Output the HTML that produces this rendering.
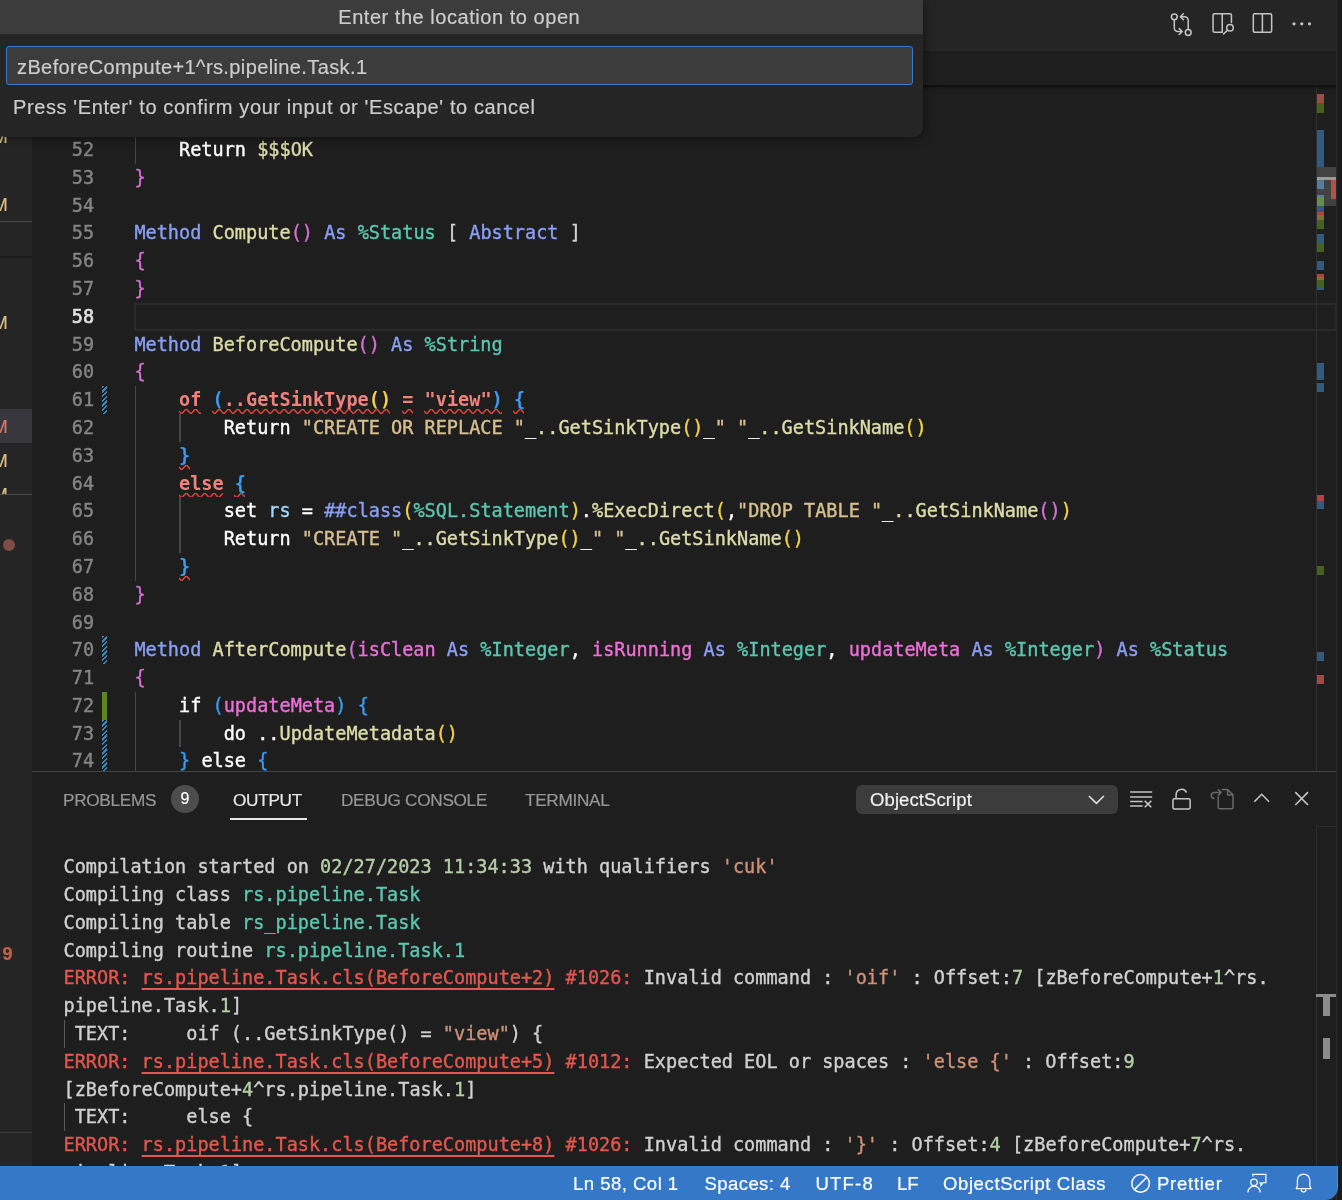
<!DOCTYPE html>
<html><head><meta charset="utf-8"><title>VS Code</title>
<style>
*{box-sizing:border-box}
html,body{margin:0;padding:0}
body{width:1342px;height:1200px;overflow:hidden;background:#1e1e1e;position:relative;font-family:"Liberation Sans","DejaVu Sans",sans-serif;color:#ccc;-webkit-text-stroke:.2px}
.abs{position:absolute}
#side{left:0;top:0;width:32px;height:1166px;background:#252526;overflow:hidden}
#side .m{position:absolute;left:-8.3px;width:16px;text-align:right;font-size:18px;color:#d9bd8b;line-height:20px}
#titlebar{left:32px;top:0;width:1305px;height:51px;background:#252526}
#crumbs{left:32px;top:51px;width:1305px;height:34px;background:#1e1e1e}
#edshadow{left:32px;top:85px;width:1304px;height:5px;background:linear-gradient(#000 0,rgba(0,0,0,0) 100%);opacity:.55}
#rightstrip{left:1336.3px;top:0;width:6px;height:1200px;background:#1b1b1b;border-left:1.4px solid #2c2c2c}
#editor{left:32px;top:85px;width:1305px;height:686px;overflow:hidden;background:#1e1e1e}
.mono{font-family:"DejaVu Sans Mono","Liberation Mono",monospace;font-size:18.54px;white-space:pre;-webkit-text-stroke:.38px}
.ln{position:absolute;left:0;width:62.2px;text-align:right;color:#858585;height:28px;line-height:28px}
.ln.cur{color:#dedede;-webkit-text-stroke:.7px}
.cl{position:absolute;left:102.4px;height:28px;line-height:28px;color:#d4d4d4}
.k{color:#8a9ff5}.f{color:#dcdcaa}.p1{color:#d670d6}.p2{color:#f5d33f}.p3{color:#3a9cf5}.t{color:#5cc7b0}
.w{color:#fff}.s{color:#d7c08f}.v{color:#a3d4f7}.a{color:#ee6fd8}.e{color:#f0827e;font-weight:bold;-webkit-text-stroke:0}
.sq{font-weight:bold;-webkit-text-stroke:0}
svg.sqg{overflow:hidden}
.ig{position:absolute;width:1.4px;background:#464646}
.ig.act{background:#707070}
.gd{position:absolute;left:70px;width:5px}
.gd.mod{background:repeating-linear-gradient(135deg,#3889c0 0,#3889c0 1.8px,transparent 1.8px,transparent 3.3px)}
.gd.add{background:#5a8628;left:70px;width:5px}
#curline{left:102px;top:218px;width:1203px;height:27.5px;border:2px solid #2a2a2a}
#ruler{left:1284px;top:0;width:21px;height:686px;border-left:1px solid #303031}
#ruler i{position:absolute;left:0;width:7px;display:block}
.rb{background:#335a7b}.rr{background:#a24945}.rg{background:#465f22}.ro{background:#7f702b}
#panel{left:32px;top:771px;width:1305px;height:395px;background:#1e1e1e;border-top:1px solid #444;overflow:hidden}
.tab{position:absolute;top:17.5px;font-size:17.2px;line-height:20px;color:#969696;letter-spacing:-.3px}
.tab.on{color:#e7e7e7}
.ol{position:absolute;left:31.5px;height:28px;line-height:28px;color:#d0d0d0}
.og{color:#b5cea8}.oo{color:#cf9178}.ot{color:#5cc7b0}.or{color:#e4564e}.ou{color:#e4564e;text-decoration:underline;text-underline-offset:4px;text-decoration-thickness:1.5px}
#status{left:0;top:1165.8px;width:1337.5px;height:34.2px;background:#3578c7;border-bottom-right-radius:13px;border-right:1px solid #4a8ada;color:#fff;font-size:18.5px;line-height:35px}
#status span{position:absolute;top:0;white-space:pre}
#qi{left:-4px;top:0;width:926.5px;height:136.6px;background:#252526;border-radius:0 0 9px 9px;box-shadow:0 0 12px rgba(0,0,0,.55)}
#qititle{left:0;top:0;width:926.5px;height:34px;background:#3c3c3c;color:#ccc;font-size:20px;line-height:34px;text-align:center;letter-spacing:.54px}
#qiinput{left:10px;top:46px;width:907px;height:38.5px;background:#3c3c3c;border:1.6px solid #3a7ad2;border-radius:3px;color:#ccc;font-size:20px;line-height:41.7px;padding-left:10px;letter-spacing:.39px}
#qimsg{left:17px;top:92.5px;font-size:20px;line-height:28px;color:#ccc;white-space:pre;letter-spacing:.61px}
svg{position:absolute;overflow:visible}
</style></head>
<body>
<div id="wrap" style="position:absolute;left:0;top:0;width:1342px;height:1200px;will-change:transform">
<div class="abs" id="titlebar"></div>
<div class="abs" id="crumbs"></div>
<svg style="left:1168px;top:11px" width="26" height="26" viewBox="0 0 26 26" fill="none" stroke="#c5c5c5" stroke-width="1.5" stroke-linecap="round" stroke-linejoin="round">
<circle cx="6.3" cy="5.8" r="2.9"/><circle cx="20.2" cy="21.5" r="2.9"/>
<path d="M6.3 8.7V17a3.5 3.5 0 0 0 3.5 3.5H14M11.2 17.5l3 3-3 3"/>
<path d="M20.2 18.6V9.3a3.5 3.5 0 0 0-3.5-3.5H12.6M15.4 2.8l-3 3 3 3"/>
</svg>
<svg style="left:1210px;top:11px" width="26" height="26" viewBox="0 0 26 26" fill="none" stroke="#c5c5c5" stroke-width="1.5" stroke-linecap="round" stroke-linejoin="round">
<path d="M12.250 21.350H4.550a1.500 1.500 0 0 1-1.500-1.500V4.250A1.500 1.500 0 0 1 4.550 2.750H19.950a1.500 1.500 0 0 1 1.500 1.500V11.400M12.250 2.750V21.350"/>
<circle cx="20" cy="16.700" r="3.300"/><path d="M17.600 19.100L13.500 23"/>
</svg>
<svg style="left:1250px;top:11px" width="26" height="26" viewBox="0 0 26 26" fill="none" stroke="#c5c5c5" stroke-width="1.5" stroke-linejoin="round">
<rect x="3.300" y="2.750" width="18.350" height="18.600" rx="1.500"/><path d="M12.400 2.750V21.350"/>
</svg>
<svg style="left:1289px;top:11px" width="26" height="26" viewBox="0 0 26 26" fill="#c5c5c5">
<circle cx="5" cy="12.800" r="1.600"/><circle cx="12.800" cy="12.800" r="1.600"/><circle cx="20.500" cy="12.800" r="1.600"/>
</svg>

<div class="abs" id="editor">
<div class="ln mono" style="top:51.10px">52</div>
<div class="cl mono" style="top:51.10px">    <span class="w">Return</span> <span class="f">$$$OK</span></div>
<div class="ln mono" style="top:78.89px">53</div>
<div class="cl mono" style="top:78.89px"><span class="p1">}</span></div>
<div class="ln mono" style="top:106.68px">54</div>
<div class="ln mono" style="top:134.47px">55</div>
<div class="cl mono" style="top:134.47px"><span class="k">Method</span> <span class="f">Compute</span><span class="p1">()</span> <span class="k">As</span> <span class="t">%Status</span> [ <span class="k">Abstract</span> ]</div>
<div class="ln mono" style="top:162.26px">56</div>
<div class="cl mono" style="top:162.26px"><span class="p1">{</span></div>
<div class="ln mono" style="top:190.05px">57</div>
<div class="cl mono" style="top:190.05px"><span class="p1">}</span></div>
<div class="ln mono cur" style="top:217.84px">58</div>
<div class="ln mono" style="top:245.63px">59</div>
<div class="cl mono" style="top:245.63px"><span class="k">Method</span> <span class="f">BeforeCompute</span><span class="p1">()</span> <span class="k">As</span> <span class="t">%String</span></div>
<div class="ln mono" style="top:273.42px">60</div>
<div class="cl mono" style="top:273.42px"><span class="p1">{</span></div>
<div class="ln mono" style="top:301.21px">61</div>
<div class="cl mono" style="top:301.21px">    <span class="e sq">of</span> <span class="p3 sq">(</span><span class="e sq">..GetSinkType</span><span class="p2 sq">()</span> <span class="e sq">=</span> <span class="e sq">"view"</span><span class="p3 sq">)</span> <span class="p3 sq">{</span></div>
<div class="ln mono" style="top:329.00px">62</div>
<div class="cl mono" style="top:329.00px">        <span class="w">Return</span> <span class="s">"CREATE OR REPLACE "</span><span class="w">_</span><span class="f">..GetSinkType</span><span class="p2">()</span><span class="w">_</span><span class="s">" "</span><span class="w">_</span><span class="f">..GetSinkName</span><span class="p2">()</span></div>
<div class="ln mono" style="top:356.79px">63</div>
<div class="cl mono" style="top:356.79px">    <span class="p3 sq">}</span></div>
<div class="ln mono" style="top:384.58px">64</div>
<div class="cl mono" style="top:384.58px">    <span class="e sq">else</span> <span class="p3 sq">{</span></div>
<div class="ln mono" style="top:412.37px">65</div>
<div class="cl mono" style="top:412.37px">        <span class="w">set</span> <span class="v">rs</span> <span class="w">=</span> <span class="k">##class</span><span class="p2">(</span><span class="t">%SQL.Statement</span><span class="p2">)</span><span class="w">.</span><span class="f">%ExecDirect</span><span class="p2">(</span><span class="w">,</span><span class="s">"DROP TABLE "</span><span class="w">_</span><span class="f">..GetSinkName</span><span class="p1">()</span><span class="p2">)</span></div>
<div class="ln mono" style="top:440.16px">66</div>
<div class="cl mono" style="top:440.16px">        <span class="w">Return</span> <span class="s">"CREATE "</span><span class="w">_</span><span class="f">..GetSinkType</span><span class="p2">()</span><span class="w">_</span><span class="s">" "</span><span class="w">_</span><span class="f">..GetSinkName</span><span class="p2">()</span></div>
<div class="ln mono" style="top:467.95px">67</div>
<div class="cl mono" style="top:467.95px">    <span class="p3 sq">}</span></div>
<div class="ln mono" style="top:495.74px">68</div>
<div class="cl mono" style="top:495.74px"><span class="p1">}</span></div>
<div class="ln mono" style="top:523.53px">69</div>
<div class="ln mono" style="top:551.32px">70</div>
<div class="cl mono" style="top:551.32px"><span class="k">Method</span> <span class="f">AfterCompute</span><span class="p1">(</span><span class="a">isClean</span> <span class="k">As</span> <span class="t">%Integer</span><span class="w">,</span> <span class="a">isRunning</span> <span class="k">As</span> <span class="t">%Integer</span><span class="w">,</span> <span class="a">updateMeta</span> <span class="k">As</span> <span class="t">%Integer</span><span class="p1">)</span> <span class="k">As</span> <span class="t">%Status</span></div>
<div class="ln mono" style="top:579.11px">71</div>
<div class="cl mono" style="top:579.11px"><span class="p1">{</span></div>
<div class="ln mono" style="top:606.90px">72</div>
<div class="cl mono" style="top:606.90px">    <span class="w">if</span> <span class="p3">(</span><span class="a">updateMeta</span><span class="p3">)</span> <span class="p3">{</span></div>
<div class="ln mono" style="top:634.69px">73</div>
<div class="cl mono" style="top:634.69px">        <span class="w">do</span> <span class="w">..</span><span class="f">UpdateMetadata</span><span class="p2">()</span></div>
<div class="ln mono" style="top:662.48px">74</div>
<div class="cl mono" style="top:662.48px">    <span class="p3">}</span> <span class="w">else</span> <span class="p3">{</span></div>
<div class="ig" style="left:102.6px;top:51.10px;height:27.79px"></div>
<div class="ig" style="left:102.6px;top:301.21px;height:194.53px"></div>
<div class="ig" style="left:147.4px;top:329.00px;height:27.79px"></div>
<div class="ig" style="left:147.4px;top:412.37px;height:55.58px"></div>
<div class="ig" style="left:102.6px;top:606.90px;height:83.37px"></div>
<div class="ig" style="left:147.4px;top:634.69px;height:27.79px"></div>
<div class="gd mod" style="top:301.21px;height:27.79px"></div>
<div class="gd mod" style="top:551.32px;height:27.79px"></div>
<div class="gd add" style="top:606.90px;height:27.79px"></div>
<div class="gd mod" style="top:634.69px;height:55.58px"></div>
<div class="abs" id="curline"></div>
<svg class="sqg" style="left:146.60px;top:324.37px" width="22.30" height="4.63"><polyline points="0.00,2.00 2.60,4.90 7.33,-0.30 9.26,2.00 11.86,4.90 16.59,-0.30 18.52,2.00 21.12,4.90 25.85,-0.30 27.78,2.00 30.38,4.90 35.11,-0.30 37.04,2.00" fill="none" stroke="#dd453b" stroke-width="1.5"/></svg>
<svg class="sqg" style="left:180.04px;top:324.37px" width="178.38" height="4.63"><polyline points="0.00,2.00 2.60,4.90 7.33,-0.30 9.26,2.00 11.86,4.90 16.59,-0.30 18.52,2.00 21.12,4.90 25.85,-0.30 27.78,2.00 30.38,4.90 35.11,-0.30 37.04,2.00 39.64,4.90 44.37,-0.30 46.30,2.00 48.90,4.90 53.63,-0.30 55.56,2.00 58.16,4.90 62.89,-0.30 64.82,2.00 67.42,4.90 72.15,-0.30 74.08,2.00 76.68,4.90 81.41,-0.30 83.34,2.00 85.94,4.90 90.67,-0.30 92.60,2.00 95.20,4.90 99.93,-0.30 101.86,2.00 104.46,4.90 109.19,-0.30 111.12,2.00 113.72,4.90 118.45,-0.30 120.38,2.00 122.98,4.90 127.71,-0.30 129.64,2.00 132.24,4.90 136.97,-0.30 138.90,2.00 141.50,4.90 146.23,-0.30 148.16,2.00 150.76,4.90 155.49,-0.30 157.42,2.00 160.02,4.90 164.75,-0.30 166.68,2.00 169.28,4.90 174.01,-0.30 175.94,2.00 178.54,4.90 183.27,-0.30 185.20,2.00 187.80,4.90 192.53,-0.30 194.46,2.00" fill="none" stroke="#dd453b" stroke-width="1.5"/></svg>
<svg class="sqg" style="left:369.58px;top:324.37px" width="11.15" height="4.63"><polyline points="0.00,2.00 2.60,4.90 7.33,-0.30 9.26,2.00 11.86,4.90 16.59,-0.30 18.52,2.00 21.12,4.90 25.85,-0.30 27.78,2.00" fill="none" stroke="#dd453b" stroke-width="1.5"/></svg>
<svg class="sqg" style="left:391.88px;top:324.37px" width="78.04" height="4.63"><polyline points="0.00,2.00 2.60,4.90 7.33,-0.30 9.26,2.00 11.86,4.90 16.59,-0.30 18.52,2.00 21.12,4.90 25.85,-0.30 27.78,2.00 30.38,4.90 35.11,-0.30 37.04,2.00 39.64,4.90 44.37,-0.30 46.30,2.00 48.90,4.90 53.63,-0.30 55.56,2.00 58.16,4.90 62.89,-0.30 64.82,2.00 67.42,4.90 72.15,-0.30 74.08,2.00 76.68,4.90 81.41,-0.30 83.34,2.00 85.94,4.90 90.67,-0.30 92.60,2.00" fill="none" stroke="#dd453b" stroke-width="1.5"/></svg>
<svg class="sqg" style="left:481.07px;top:324.37px" width="11.15" height="4.63"><polyline points="0.00,2.00 2.60,4.90 7.33,-0.30 9.26,2.00 11.86,4.90 16.59,-0.30 18.52,2.00 21.12,4.90 25.85,-0.30 27.78,2.00" fill="none" stroke="#dd453b" stroke-width="1.5"/></svg>
<svg class="sqg" style="left:146.60px;top:379.95px" width="11.15" height="4.63"><polyline points="0.00,2.00 2.60,4.90 7.33,-0.30 9.26,2.00 11.86,4.90 16.59,-0.30 18.52,2.00 21.12,4.90 25.85,-0.30 27.78,2.00" fill="none" stroke="#dd453b" stroke-width="1.5"/></svg>
<svg class="sqg" style="left:146.60px;top:407.74px" width="44.60" height="4.63"><polyline points="0.00,2.00 2.60,4.90 7.33,-0.30 9.26,2.00 11.86,4.90 16.59,-0.30 18.52,2.00 21.12,4.90 25.85,-0.30 27.78,2.00 30.38,4.90 35.11,-0.30 37.04,2.00 39.64,4.90 44.37,-0.30 46.30,2.00 48.90,4.90 53.63,-0.30 55.56,2.00" fill="none" stroke="#dd453b" stroke-width="1.5"/></svg>
<svg class="sqg" style="left:202.34px;top:407.74px" width="11.15" height="4.63"><polyline points="0.00,2.00 2.60,4.90 7.33,-0.30 9.26,2.00 11.86,4.90 16.59,-0.30 18.52,2.00 21.12,4.90 25.85,-0.30 27.78,2.00" fill="none" stroke="#dd453b" stroke-width="1.5"/></svg>
<svg class="sqg" style="left:146.60px;top:491.11px" width="11.15" height="4.63"><polyline points="0.00,2.00 2.60,4.90 7.33,-0.30 9.26,2.00 11.86,4.90 16.59,-0.30 18.52,2.00 21.12,4.90 25.85,-0.30 27.78,2.00" fill="none" stroke="#dd453b" stroke-width="1.5"/></svg>
<div class="abs" id="ruler">
<i class="rr" style="top:9.0px;height:9.4px"></i>
<i class="rg" style="top:18.4px;height:9.2px"></i>
<i class="rb" style="top:45.4px;height:37.0px"></i>
<i class="rb" style="top:121.4px;height:5.6px"></i>
<i class="rr" style="top:127.0px;height:2.6px"></i>
<i class="ro" style="top:129.6px;height:5.4px"></i>
<i class="rg" style="top:135.0px;height:9.0px"></i>
<i class="rb" style="top:149.0px;height:9.0px"></i>
<i class="rg" style="top:158.0px;height:9.4px"></i>
<i class="rb" style="top:176.0px;height:9.0px"></i>
<i class="rr" style="top:188.6px;height:3.4px"></i>
<i class="ro" style="top:192.0px;height:3.0px"></i>
<i class="rg" style="top:195.0px;height:7.0px"></i>
<i class="rb" style="top:202.0px;height:2.6px"></i>
<i class="rb" style="top:277.8px;height:17.2px"></i>
<i class="rb" style="top:297.8px;height:9.2px"></i>
<i class="rr" style="top:409.8px;height:6.2px"></i>
<i class="rb" style="top:416.0px;height:8.0px"></i>
<i class="rg" style="top:481.0px;height:9.0px"></i>
<i class="rb" style="top:567.0px;height:9.0px"></i>
<i class="rr" style="top:590.0px;height:9.0px"></i>
<div class="abs" style="left:0;top:82.4px;width:21px;height:38.6px;background:#424242"></div>
<i style="top:95px;height:9px;background:#587d9b"></i>
<i style="top:110px;height:2px;background:#587d9b"></i>
<i style="top:112px;height:9.4px;background:#6b8b4e"></i>
<div class="abs" style="left:0;top:92px;width:21px;height:3px;background:#9a9a9a"></div>
<div class="abs" style="left:14px;top:95px;width:7px;height:19px;background:#b0514b"></div>
</div>
</div>
<div class="abs" id="edshadow"></div>
<div class="abs" id="panel">
<div class="tab" style="left:31px">PROBLEMS</div>
<div class="tab on" style="left:201px">OUTPUT</div>
<div class="tab" style="left:309px">DEBUG CONSOLE</div>
<div class="tab" style="left:493px">TERMINAL</div>
<div class="abs" style="left:139px;top:13px;width:28px;height:28px;border-radius:14px;background:#4d4d4d;color:#fff;font-size:16px;line-height:28px;text-align:center">9</div>
<div class="abs" style="left:198px;top:46px;width:77px;height:2px;background:#e7e7e7"></div>
<div class="abs" style="left:824px;top:12.5px;width:262px;height:29.5px;border-radius:6px;background:#3c3c3c;color:#f0f0f0;font-size:18.5px;line-height:30px;padding-left:14px;letter-spacing:.1px">ObjectScript</div>
<div class="ol mono" style="top:81.20px">Compilation started on <span class="og">02/27/2023 11:34:33</span> with qualifiers <span class="oo">'cuk'</span></div>
<div class="ol mono" style="top:108.99px">Compiling class <span class="ot">rs.pipeline.Task</span></div>
<div class="ol mono" style="top:136.78px">Compiling table <span class="ot">rs_pipeline.Task</span></div>
<div class="ol mono" style="top:164.57px">Compiling routine <span class="ot">rs.pipeline.Task.1</span></div>
<div class="ol mono" style="top:192.36px"><span class="or">ERROR: </span><span class="ou">rs.pipeline.Task.cls(BeforeCompute+2)</span><span class="or"> #1026:</span> Invalid command : <span class="oo">'oif'</span> : Offset:<span class="og">7</span> [zBeforeCompute+<span class="og">1</span>^rs.</div>
<div class="ol mono" style="top:220.15px">pipeline.Task.<span class="og">1</span>]</div>
<div class="ol mono" style="top:247.94px"> TEXT:     oif (..GetSinkType() = <span class="oo">"view"</span>) {</div>
<div class="ol mono" style="top:275.73px"><span class="or">ERROR: </span><span class="ou">rs.pipeline.Task.cls(BeforeCompute+5)</span><span class="or"> #1012:</span> Expected EOL or spaces : <span class="oo">'else {'</span> : Offset:<span class="og">9</span></div>
<div class="ol mono" style="top:303.52px">[zBeforeCompute+<span class="og">4</span>^rs.pipeline.Task.<span class="og">1</span>]</div>
<div class="ol mono" style="top:331.31px"> TEXT:     else {</div>
<div class="ol mono" style="top:359.10px"><span class="or">ERROR: </span><span class="ou">rs.pipeline.Task.cls(BeforeCompute+8)</span><span class="or"> #1026:</span> Invalid command : <span class="oo">'}'</span> : Offset:<span class="og">4</span> [zBeforeCompute+<span class="og">7</span>^rs.</div>
<div class="ol mono" style="top:386.89px">pipeline.Task.<span class="og">1</span>]</div>
<div class="abs" style="left:32px;top:247.94px;width:1px;height:27.79px;background:#5a5a5a"></div>
<div class="abs" style="left:32px;top:331.31px;width:1px;height:27.79px;background:#5a5a5a"></div>
<div class="abs" style="left:1284px;top:54px;width:21px;height:340px;border-left:1px solid #303031"></div>
<div class="abs" style="left:1284px;top:54px;width:21px;height:170px;border:1px solid #2c2c2c"></div>
<div class="abs" style="left:1284px;top:222px;width:21px;height:3px;background:#8c8c8c"></div>
<div class="abs" style="left:1291px;top:225px;width:7px;height:19px;background:#8c8c8c"></div>
<div class="abs" style="left:1291px;top:266px;width:7px;height:21px;background:#8c8c8c"></div>
</div>
<svg style="left:1128px;top:786px" width="26" height="26" viewBox="0 0 26 26" fill="none" stroke="#c5c5c5" stroke-width="1.500">
<path d="M2.100 6.100H24.200M2.100 11H24.200M2.100 15.500H14.700M2.100 20H14.700M16.700 14.900l6.600 6.400M23.300 14.900l-6.600 6.400"/>
</svg>
<svg style="left:1168px;top:786px" width="26" height="26" viewBox="0 0 26 26" fill="none" stroke="#c5c5c5" stroke-width="1.500" stroke-linejoin="round">
<rect x="4.950" y="12.650" width="17.200" height="10.400" rx="1.500"/><path d="M8.100 12.600V8.900a5.500 5.500 0 0 1 10.480-2.320"/>
</svg>
<svg style="left:1209px;top:786px" width="26" height="26" viewBox="0 0 26 26" fill="none" stroke="#686868" stroke-width="1.500" stroke-linejoin="round">
<path d="M9.200 10.500V21.300a1.500 1.500 0 0 0 1.500 1.500H22.500a1.500 1.500 0 0 0 1.500-1.500V8.900L18.600 3.500H12.800M18.600 3.500V8.900H24M5.500 12.400H5.300a3 3 0 0 1 0-6H12M8.900 3.200l3.200 3.200-3.200 3.300"/>
</svg>
<svg style="left:1249px;top:786px" width="26" height="26" viewBox="0 0 26 26" fill="none" stroke="#c5c5c5" stroke-width="1.600">
<path d="M5.300 15.800L12.700 8.300L20 15.800"/>
</svg>
<svg style="left:1289px;top:786px" width="26" height="26" viewBox="0 0 26 26" fill="none" stroke="#c5c5c5" stroke-width="1.600">
<path d="M6.300 6.100L19 19M19 6.100L6.300 19"/>
</svg>
<svg style="left:1084px;top:786px" width="26" height="26" viewBox="0 0 26 26" fill="none" stroke="#e0e0e0" stroke-width="1.600">
<path d="M4.900 10L12.400 17.300L19.900 10"/>
</svg>
<div class="abs" id="side">
<div class="m" style="top:127px">M</div>
<div class="m" style="top:195px">M</div>
<div class="m" style="top:313px">M</div>
<div class="abs" style="left:0;top:409px;width:32px;height:34px;background:#37373d"></div>
<div class="m" style="top:417px;color:#d47b6a">M</div>
<div class="m" style="top:451px">M</div>
<div class="m" style="top:485px">M</div>
<div class="abs" style="left:0;top:221px;width:32px;height:1px;background:#4a4a4a"></div>
<div class="abs" style="left:0;top:256px;width:32px;height:3px;background:linear-gradient(#151515,#252526)"></div>
<div class="abs" style="left:0;top:494px;width:32px;height:40px;background:#252526;border-top:1px solid #4a4a4a"></div>
<div class="abs" style="left:3px;top:539px;width:12px;height:12px;border-radius:6px;background:#7d4c43"></div>
<div class="abs" style="left:2.5px;top:943.5px;font-size:18px;line-height:20px;color:#c4604f;font-weight:bold">9</div>
<div class="abs" style="left:0;top:1132px;width:32px;height:1px;background:#3c3c3c"></div>
</div>
<div class="abs" id="rightstrip"></div>
<div class="abs" id="status">
<span style="left:573px;letter-spacing:.49px">Ln 58, Col 1</span>
<span style="left:704.5px;letter-spacing:.43px">Spaces: 4</span>
<span style="left:815.5px;letter-spacing:1.2px">UTF-8</span>
<span style="left:897px">LF</span>
<span style="left:943px;letter-spacing:.61px">ObjectScript Class</span>
<span style="left:1157px;letter-spacing:.74px">Prettier</span>
<svg style="left:1130px;top:7px" width="22" height="22" viewBox="0 0 22 22" fill="none" stroke="#fff" stroke-width="1.500">
<circle cx="10.600" cy="10.400" r="8.800"/><path d="M4.400 16.600L16.800 4.200"/>
</svg>
<svg style="left:1246px;top:6.200px" width="24" height="24" viewBox="0 0 24 24" fill="none" stroke="#fff" stroke-width="1.250" stroke-linejoin="miter">
<path d="M6.900 4.600V2.300H19.900V10.600H17.200L14.900 13.400V10.900H13.400"/><circle cx="8" cy="10.300" r="3.300"/><path d="M1.900 20.400a6.150 6.150 0 0 1 12.300 0"/>
</svg>
<svg style="left:1293px;top:6.200px" width="24" height="24" viewBox="0 0 24 24" fill="none" stroke="#fff" stroke-width="1.250" stroke-linejoin="round">
<path d="M4.400 14V8.200a6.200 6.200 0 0 1 12.400 0V14l1.200 2.600H3.200zM8.200 17.600a2.400 2.400 0 0 0 4.800 0"/>
</svg>

</div>
<div class="abs" id="qi">
<div class="abs" id="qititle">Enter the location to open</div>
<div class="abs" id="qiinput">zBeforeCompute+1^rs.pipeline.Task.1</div>
<div class="abs" id="qimsg">Press 'Enter' to confirm your input or 'Escape' to cancel</div>
</div>
</div>
</body></html>
